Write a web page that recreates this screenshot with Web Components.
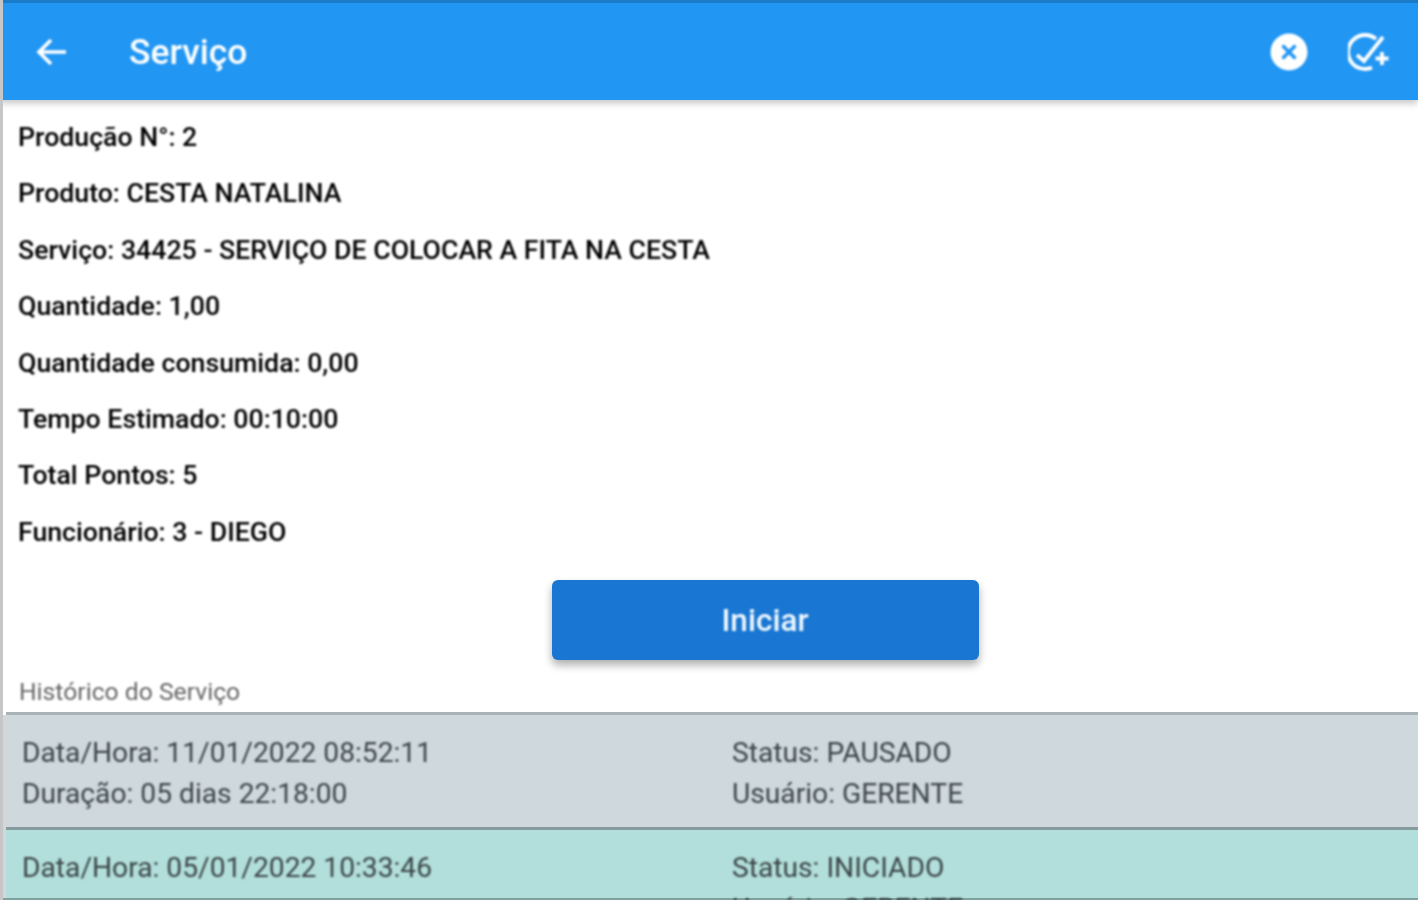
<!DOCTYPE html>
<html><head><meta charset="utf-8"><style>
html,body{margin:0;height:900px;overflow:hidden;background:#fff}
body{font-family:Roboto,"Liberation Sans",sans-serif}
</style></head><body>
<template id="t-screen"><style>
:host{display:flex;flex-direction:column;height:900px;overflow:hidden;border-left:3px solid #c4c6c8;background:#fff;position:relative}
:host::after{content:"";position:absolute;left:0;right:0;bottom:0;height:2px;background:rgba(50,70,70,.4)}
::slotted(*){flex:none}
</style><slot></slot></template>
<template id="t-bar"><style>
:host{display:flex;align-items:center;height:97px;margin-left:-3px;border-left:3px solid #4f86b5;background:#2196f3;border-top:3px solid #1a7cc9;box-shadow:0 3px 7px rgba(0,0,0,.24);position:relative;color:#fff}
.back{width:32px;height:30px;margin-left:33px;flex:none;filter:blur(.8px)}
.t{margin-left:61px;font:500 35.400px Roboto,sans-serif;flex:1;filter:blur(.8px)}
.i{flex:none;display:block;filter:blur(.8px)}
</style>
<svg class="back" viewBox="0 0 32 30" fill="none" stroke="#fff" stroke-width="3.600"><path d="M30 15H4M15 3L3 15l12 12"/></svg>
<span class="t"><slot></slot></span>
<svg class="i" style="width:38px;height:38px;margin-right:40px" viewBox="0 0 38 38"><circle cx="19" cy="19" r="18.500" fill="#fff"/><path d="M12.500 12.500l13 13M25.500 12.500l-13 13" stroke="#2196f3" stroke-width="3.400"/></svg>
<svg class="i" style="width:42px;height:38px;margin-right:28px" viewBox="0 0 42 38" fill="none" stroke="#fff" stroke-width="3.800"><path d="M28 6A17 17 0 1 0 24 34.500"/><path d="M9 22l7 6L35 4"/><path d="M34 19v13M27.500 25.500h13"/></svg>
</template>
<template id="t-info"><style>
:host{display:flex;flex-direction:column;gap:26.400px;font:500 26.700px/30px Roboto,sans-serif;color:#000;padding:22px 0 0 15px;filter:blur(.8px)}
</style><slot></slot></template>
<template id="t-btn"><style>
:host{display:flex;justify-content:center;padding:33px 0 0 109px}
span{display:flex;width:427px;height:79px;padding-top:1px;align-items:center;justify-content:center;background:#1976d2;border-radius:6px;color:#f2f9fe;font:500 31.500px Roboto,sans-serif;box-shadow:0 5px 8px rgba(0,0,0,.32)}
b{font-weight:500;filter:blur(.8px)}
</style><span><b><slot></slot></b></span></template>
<template id="t-head"><style>
:host{display:block;font:400 24.700px/28px Roboto,sans-serif;color:#666;padding:18px 0 6px 16px;filter:blur(.8px)}
</style><slot></slot></template>
<template id="t-hist"><style>
:host{display:block;margin-left:3px;box-shadow:-3px 3px 0 #d4d6d7;background:var(--bg);border-top:3px solid var(--line);height:112px;color:#3c4548}
.g{display:grid;grid-template-columns:710px 1fr;padding:17px 0 0 16px;font:400 28.200px/41px Roboto,sans-serif;filter:blur(.8px)}
</style><div class="g"><slot></slot></div></template>
<app-screen>
<app-bar>Serviço</app-bar>
<info-block></info-block>
<app-btn>Iniciar</app-btn>
<sec-head>Histórico do Serviço</sec-head>
<hist-row style="--bg:#cfd8dc;--line:#aab4b8"><span>Data/Hora: 11/01/2022 08:52:11</span><span>Status: PAUSADO</span><span>Duração: 05 dias 22:18:00</span><span>Usuário: GERENTE</span></hist-row>
<hist-row style="--bg:#b2dfdb;--line:#859b9d"><span>Data/Hora: 05/01/2022 10:33:46</span><span>Status: INICIADO</span><span></span><span>Usuário: GERENTE</span></hist-row>
</app-screen>
<script>
function def(name,tid){customElements.define(name,class extends HTMLElement{constructor(){super();this.attachShadow({mode:"open"}).appendChild(document.getElementById(tid).content.cloneNode(true));}});}
def("app-screen","t-screen");def("app-bar","t-bar");def("info-block","t-info");def("app-btn","t-btn");def("sec-head","t-head");def("hist-row","t-hist");
const b=document.querySelector("info-block");
for(const l of ["Produção N°: 2","Produto: CESTA NATALINA","Serviço: 34425 - SERVIÇO DE COLOCAR A FITA NA CESTA","Quantidade: 1,00","Quantidade consumida: 0,00","Tempo Estimado: 00:10:00","Total Pontos: 5","Funcionário: 3 - DIEGO"]){const e=document.createElement("div");e.textContent=l;b.appendChild(e);}
</script>
</body></html>
